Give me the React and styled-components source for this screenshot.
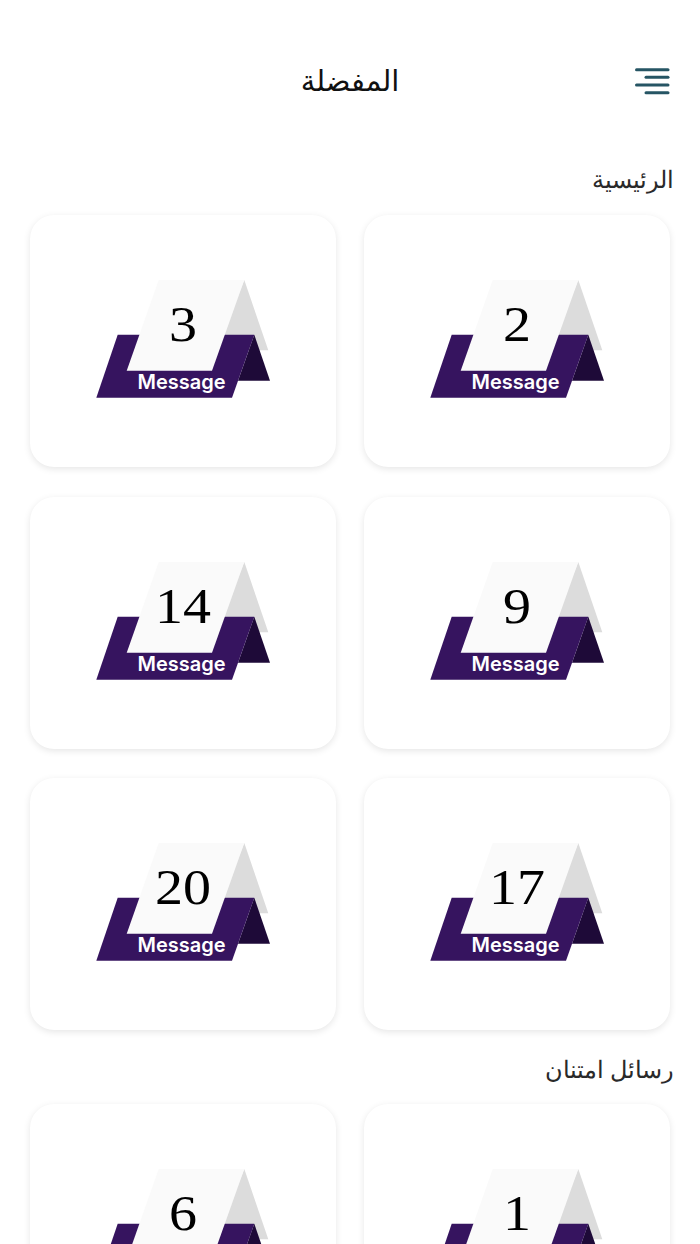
import React from 'react';
import styled, { createGlobalStyle } from 'styled-components';

const GlobalStyle = createGlobalStyle`
  html, body {
    margin: 0;
    background: #fff;
  }
  body {
    font-family: 'Noto Sans', 'DejaVu Sans', sans-serif;
  }
`;

const Page = styled.div`
  width: 700px;
  height: 1244px;
  overflow: hidden;
  direction: rtl;
  box-sizing: border-box;
  padding: 0 26px 0 30px;
`;

const Header = styled.header`
  height: 163px;
  box-sizing: border-box;
  padding: 0 4px 4px 0;
  display: flex;
  align-items: center;
  justify-content: center;
  position: relative;
`;

const Title = styled.h1`
  margin: 0;
  font-size: 29px;
  font-weight: 400;
  color: #111;
`;

const MenuButton = styled.div`
  position: absolute;
  right: 4px;
  top: 67px;
  width: 35px;
  height: 28px;
`;

const SectionTitle = styled.h2`
  margin: ${props => props.$top || 0}px 0 0;
  font-size: 24px;
  line-height: 32px;
  font-weight: 300;
  color: #2a2a2a;
`;

const Grid = styled.div`
  display: grid;
  grid-template-columns: 306px 306px;
  column-gap: 28px;
  row-gap: 29.5px;
  margin: ${props => props.$top}px 4px 0 0;
`;

const Card = styled.div`
  height: 252px;
  background: #fff;
  border-radius: 24px;
  box-shadow: 0 2px 7px rgba(0, 0, 0, 0.1);
  display: flex;
  justify-content: center;
  padding-top: 65px;
  box-sizing: border-box;
`;

const Tent = styled.div`
  position: relative;
  width: 175px;
  height: 118px;
  direction: ltr;
`;

const Num = styled.span`
  position: absolute;
  left: 32px;
  width: 110px;
  top: 14px;
  text-align: center;
  font-family: 'Liberation Serif', serif;
  font-size: 50px;
  line-height: 60px;
  color: #000;
  transform: scaleX(1.12);
`;

const Label = styled.span`
  position: absolute;
  left: 1px;
  width: 170px;
  top: 90px;
  text-align: center;
  font-family: Inter, sans-serif;
  font-weight: 600;
  font-size: 20px;
  line-height: 24px;
  color: #fff;
`;

const Menu = () => (
  <svg width="35" height="28" viewBox="0 0 35 28">
    <g stroke="#265564" strokeWidth="3" strokeLinecap="round">
      <line x1="1.5" y1="2.7" x2="33" y2="2.7" />
      <line x1="11" y1="10.3" x2="33" y2="10.3" />
      <line x1="1.5" y1="18" x2="33" y2="18" />
      <line x1="11" y1="25.7" x2="33" y2="25.7" />
    </g>
  </svg>
);

const TentArt = () => (
  <svg width="175" height="118" viewBox="0 0 175 118">
    <polygon points="148.3,0 172.3,70.3 120,70.3" fill="#dcdcdc" />
    <polygon points="158.3,54.7 174,100.7 142,100.7" fill="#1e0a38" />
    <polygon points="21.7,54.7 158.3,54.7 136,117.7 0.3,117.7" fill="#36145f" />
    <polygon points="62.7,0 148.3,0 116,90.7 30.7,90.7" fill="#fafafa" />
  </svg>
);

const main = [2, 3, 9, 14, 17, 20];
const thanks = [1, 6];

const MessageCard = ({ n }) => (
  <Card>
    <Tent>
      <TentArt />
      <Num>{n}</Num>
      <Label>Message</Label>
    </Tent>
  </Card>
);

export default function App() {
  return (
    <>
      <GlobalStyle />
      <Page dir="rtl">
        <Header>
          <Title>المفضلة</Title>
          <MenuButton><Menu /></MenuButton>
        </Header>
        <SectionTitle>الرئيسية</SectionTitle>
        <Grid $top={20}>
          {main.map(n => <MessageCard key={n} n={n} />)}
        </Grid>
        <SectionTitle $top={23}>رسائل امتنان</SectionTitle>
        <Grid $top={19}>
          {thanks.map(n => <MessageCard key={n} n={n} />)}
        </Grid>
      </Page>
    </>
  );
}
